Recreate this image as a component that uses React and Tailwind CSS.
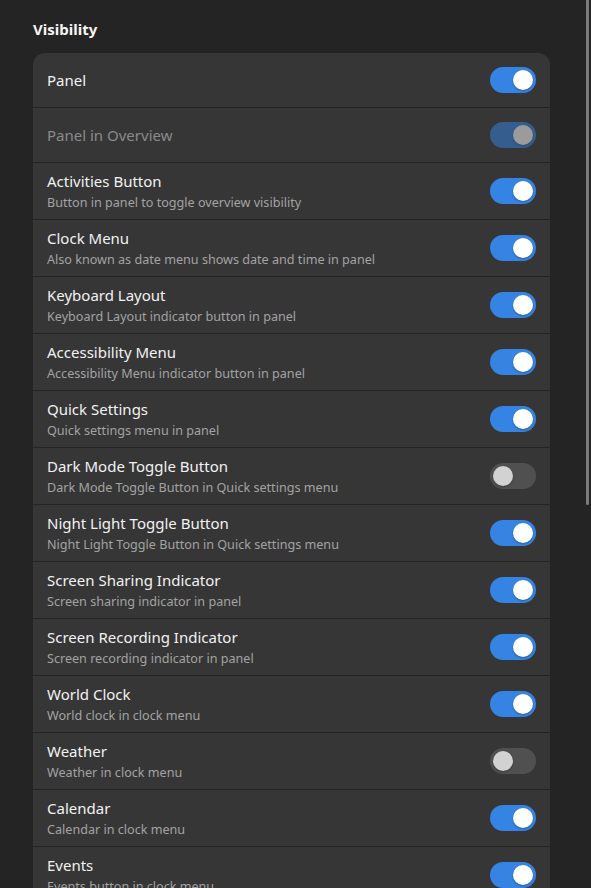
import React from "react";

const rows = [
  { title: "Panel", on: true },
  { title: "Panel in Overview", on: true, disabled: true },
  { title: "Activities Button", sub: "Button in panel to toggle overview visibility", on: true },
  { title: "Clock Menu", sub: "Also known as date menu shows date and time in panel", on: true },
  { title: "Keyboard Layout", sub: "Keyboard Layout indicator button in panel", on: true },
  { title: "Accessibility Menu", sub: "Accessibility Menu indicator button in panel", on: true },
  { title: "Quick Settings", sub: "Quick settings menu in panel", on: true },
  { title: "Dark Mode Toggle Button", sub: "Dark Mode Toggle Button in Quick settings menu", on: false },
  { title: "Night Light Toggle Button", sub: "Night Light Toggle Button in Quick settings menu", on: true },
  { title: "Screen Sharing Indicator", sub: "Screen sharing indicator in panel", on: true },
  { title: "Screen Recording Indicator", sub: "Screen recording indicator in panel", on: true },
  { title: "World Clock", sub: "World clock in clock menu", on: true },
  { title: "Weather", sub: "Weather in clock menu", on: false },
  { title: "Calendar", sub: "Calendar in clock menu", on: true },
  { title: "Events", sub: "Events button in clock menu", on: true },
];

const Switch = ({ on, disabled }) => (
  <div
    className={`flex items-center w-[46px] h-[26px] rounded-full px-[3px] shrink-0 ${
      on ? "bg-[#3584e4] justify-end" : "bg-[#505050] justify-start"
    } ${disabled ? "opacity-50" : ""}`}
  >
    <div
      className={`w-[20px] h-[20px] rounded-full shadow-[0_1px_2px_rgba(0,0,0,0.3)] ${
        on ? "bg-white" : "bg-[#d2d2d2]"
      }`}
    />
  </div>
);

// border adds to height: first row 54, others 55 / 57 with separator
const Row = ({ title, sub, on, disabled }) => (
  <div
    className={`box-content flex items-center justify-between px-[14px] border-t border-[#232323] first:border-t-0 ${
      sub ? "h-[56px]" : "h-[54px]"
    }`}
  >
    <div className="flex flex-col">
      <span
        className={`text-[15px] leading-[20px] ${
          disabled ? "text-[#8a8a8a]" : "text-[#f2f2f2]"
        }`}
      >
        {title}
      </span>
      {sub && (
        <span className="text-[12.6px] leading-[18px] mt-[3px] text-[#a3a3a3]">
          {sub}
        </span>
      )}
    </div>
    <Switch on={on} disabled={disabled} />
  </div>
);

const App = () => {
  return (
    <div
      className="relative h-[888px] overflow-hidden bg-[#242424] pl-[33px] pr-[41px] pt-[19px]"
      style={{ fontFamily: '"Noto Sans", "Open Sans", sans-serif' }}
    >
      <h2 className="text-[15px] font-bold leading-[20px] text-[#f5f5f5] mb-[14px]">
        Visibility
      </h2>
      <div className="bg-[#363636] rounded-[12px] overflow-hidden">
        {rows.map((r) => (
          <Row key={r.title} {...r} />
        ))}
      </div>
      <div className="absolute right-[2px] top-0 w-[3px] h-[505px] rounded-b-full bg-[#7c7c7c]" />
    </div>
  );
};

export default App;
